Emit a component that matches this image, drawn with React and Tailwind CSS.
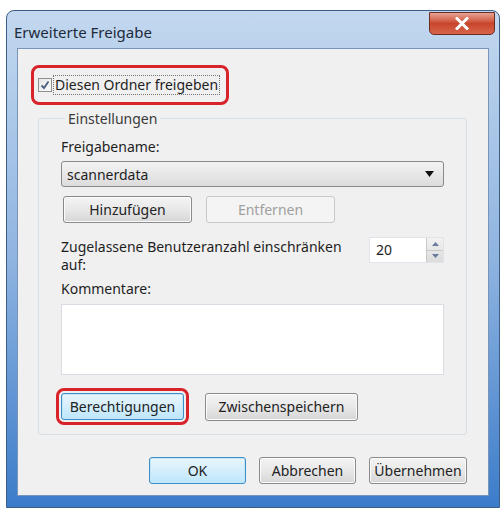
import React from 'react';

const font = { fontFamily: '"Noto Sans", "Open Sans", sans-serif' };

// Win7-style push button
const Btn = ({ children, className = '', disabled, focus }) => (
  <div
    className={
      'flex items-center justify-center rounded-[3px] border text-[14px] whitespace-nowrap ' +
      (disabled
        ? 'border-[#c9c9c9] bg-[#f4f4f4] text-[#a0a0a0] '
        : focus
        ? 'border-[#3c8fc8] bg-gradient-to-b from-[#eaf6fd] to-[#bee6fd] text-[#222] shadow-[inset_0_0_0_1px_#c4e5f6] '
        : 'border-[#8a8a8a] bg-gradient-to-b from-[#f4f4f4] via-[#e8e8e8] to-[#d6d6d6] text-[#222] shadow-[inset_0_0_0_1px_#fbfbfb] ') +
      className
    }
  >
    {children}
  </div>
);

export default function App() {
  return (
    <div className="h-[512px] w-[504px] overflow-hidden bg-white pl-[6px] pt-[10px]" style={font}>
      <div className="flex h-[498px] w-[494px] flex-col rounded-t-[8px] border border-[#3b5d86] bg-gradient-to-b from-[#c3d8ef] via-[#8fb4e0] to-[#3b7cc9] px-[10px] pb-[11px]">
        {/* title bar */}
        <div className="flex h-[37px] items-start justify-between">
          <div className="ml-[-3px] mt-[10px] text-[15px] text-[#1d2a3a]">Erweiterte Freigabe</div>
          <div className="mr-[-6px] mt-[1px] flex h-[23px] w-[66px] items-center justify-center rounded-b-[5px] border border-[#6b2c22] bg-gradient-to-b from-[#e8a394] via-[#c8452c] to-[#d8654b]">
            <svg width="14" height="13" viewBox="0 0 14 13">
              <path d="M2 1.5 L12 11.5 M12 1.5 L2 11.5" stroke="#fff" strokeWidth="3" strokeLinecap="square" />
            </svg>
          </div>
        </div>

        {/* client area */}
        <div className="flex flex-1 flex-col border border-[#7894b8] bg-[#f0f0f0] text-[14px] text-[#1e1e1e]">
          {/* share checkbox */}
          <div className="ml-[13px] mt-[16px] flex h-[40px] w-[198px] items-center rounded-[8px] border-[3px] border-[#d8232a] pl-[4px]">
            <div className="flex h-[14px] w-[14px] items-center justify-center border border-[#8e8f8f] bg-gradient-to-br from-[#e6e6e6] to-[#fbfbfb]">
              <svg width="10" height="10" viewBox="0 0 10 10">
                <path d="M1.5 5.5 L4 8 L8.5 1.5" fill="none" stroke="#4a5f80" strokeWidth="1.8" />
              </svg>
            </div>
            <span className="ml-[1px] whitespace-nowrap border border-dotted border-[#777] px-[1px] leading-[18px]">Diesen Ordner freigeben</span>
          </div>

          {/* settings group */}
          <fieldset className="ml-[20px] mr-[21px] mt-[3px] h-[327px] rounded-[3px] border border-[#d5dfe5] px-[22px]">
            <legend className="ml-[4px] px-[3px] text-[14px] text-[#3a3a3a]">Einstellungen</legend>

            <div className="mt-[8px] leading-[20px]">Freigabename:</div>
            <div className="mt-[4px] flex h-[26px] items-center justify-between rounded-[3px] border border-[#8a8a8a] bg-gradient-to-b from-[#f3f3f3] to-[#dcdcdc] pl-[5px] pr-[9px]">
              <span>scannerdata</span>
              <svg width="9" height="6" viewBox="0 0 9 6">
                <path d="M0 0 H9 L4.5 6 Z" fill="#111" />
              </svg>
            </div>

            <div className="mt-[9px] flex gap-[14px] pl-[2px]">
              <Btn className="h-[27px] w-[129px]">Hinzufügen</Btn>
              <Btn disabled className="h-[27px] w-[129px]">Entfernen</Btn>
            </div>

            <div className="mt-[14px] flex items-start justify-between">
              <div className="mt-[1px] leading-[18px]">
                Zugelassene Benutzeranzahl einschränken
                <br />
                auf:
              </div>
              <div className="flex h-[26px] w-[75px] border border-[#e2e3ea] bg-white">
                <span className="flex-1 pl-[6px] leading-[24px]">20</span>
                <div className="flex w-[17px] flex-col border-l border-[#c9c9c9] bg-gradient-to-b from-[#f2f2f2] to-[#dcdcdc]">
                  <div className="flex flex-1 items-center justify-center border-b border-[#c9c9c9]">
                    <svg width="7" height="4" viewBox="0 0 7 4"><path d="M0 4 L3.5 0 L7 4 Z" fill="#6a7b9c" /></svg>
                  </div>
                  <div className="flex flex-1 items-center justify-center">
                    <svg width="7" height="4" viewBox="0 0 7 4"><path d="M0 0 L3.5 4 L7 0 Z" fill="#6a7b9c" /></svg>
                  </div>
                </div>
              </div>
            </div>

            <div className="mt-[5px] leading-[20px]">Kommentare:</div>
            <div className="mt-[5px] h-[71px] border border-[#d8dce3] bg-white" />

            <div className="mt-[13px] flex items-center gap-[16px]">
              <div className="ml-[-5px] rounded-[8px] border-[3px] border-[#d8232a] p-[2px]">
                <Btn focus className="h-[27px] w-[123px]">Berechtigungen</Btn>
              </div>
              <Btn className="h-[28px] w-[153px]">Zwischenspeichern</Btn>
            </div>
          </fieldset>

          {/* dialog buttons */}
          <div className="mr-[21px] mt-[22px] flex justify-end gap-[13px]">
            <Btn focus className="h-[27px] w-[97px]">OK</Btn>
            <Btn className="h-[27px] w-[97px]">Abbrechen</Btn>
            <Btn className="h-[27px] w-[98px]">Übernehmen</Btn>
          </div>
        </div>
      </div>
    </div>
  );
}
